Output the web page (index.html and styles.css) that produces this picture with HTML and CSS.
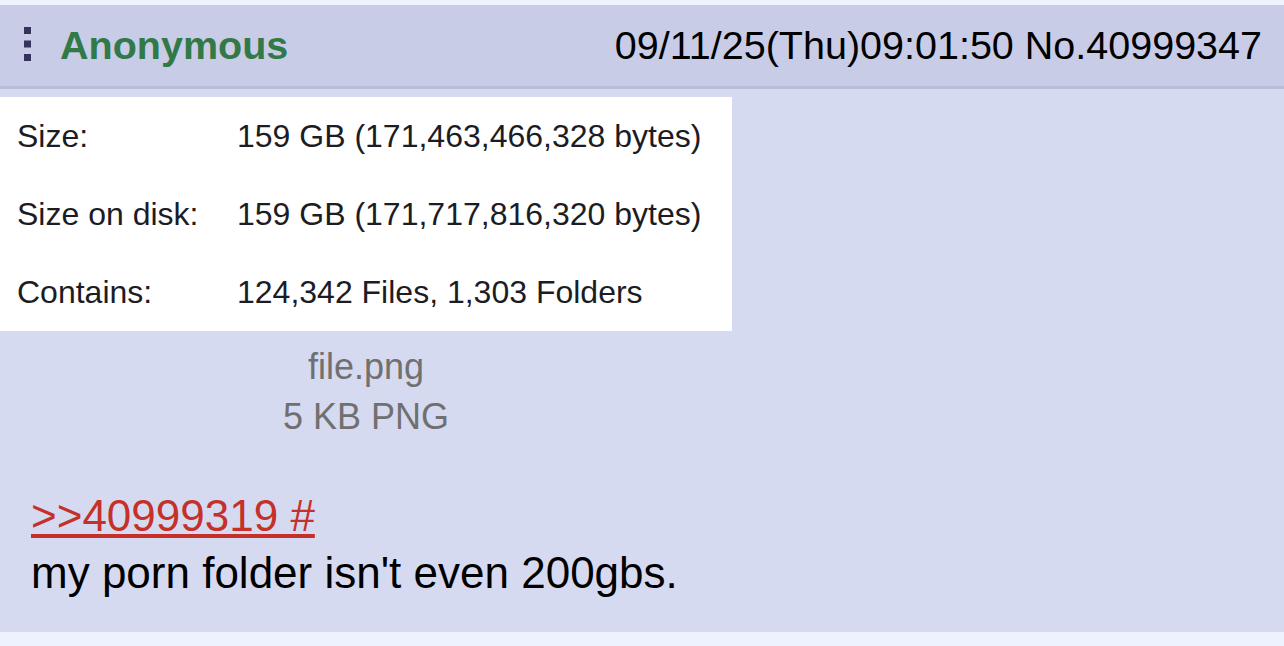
FILE: index.html
```html
<!DOCTYPE html>
<html>

<head>
    <meta charset="utf-8" />
    <title>No.40999347</title>
    <meta name="viewport" content="width=device-width, initial-scale=1">
    <link rel="stylesheet" href="styles.css">
</head>

<body>
    <div class="post">
        <div class="post-header">
            <svg class="menu-dots" width="7" height="34" viewBox="0 0 7 34">
                <rect x="0" y="0" width="7" height="7" />
                <rect x="0" y="13.5" width="7" height="7" />
                <rect x="0" y="27" width="7" height="7" />
            </svg>
            <span class="name">Anonymous</span>
            <span class="date-num">09/11/25(Thu)09:01:50 No.40999347</span>
        </div>
        <div class="post-body">
            <div class="file">
                <div class="thumb">
                    <span class="label">Size:</span>
                    <span class="value">159 GB (171,463,466,328 bytes)</span>
                    <span class="label">Size on disk:</span>
                    <span class="value">159 GB (171,717,816,320 bytes)</span>
                    <span class="label">Contains:</span>
                    <span class="value">124,342 Files, 1,303 Folders</span>
                </div>
                <div class="file-info">
                    file.png<br/>
                    5 KB PNG
                </div>
            </div>
            <div class="message">
                <a class="quotelink" href="#p40999319">&gt;&gt;40999319 #</a><br/>
                my porn folder isn't even 200gbs.
            </div>
        </div>
    </div>
</body>

</html>
```

FILE: styles.css
```css
body {
    margin: 0;
    padding-top: 5px;
    background-color: #eef2ff;
    font-family: 'Liberation Sans', Arial, sans-serif;
    color: #000;
}

.post-header {
    height: 81px;
    display: flex;
    align-items: center;
    padding: 0 22px 0 24px;
    background-color: #c9cce6;
    border-bottom: 3px solid #b9bdd8;
    font-size: 39.5px;
}

.menu-dots {
    fill: #33335c;
    margin-top: -3px;
}

.name {
    margin-left: 29px;
    font-weight: bold;
    color: #317a48;
}

.date-num {
    margin-left: auto;
}

.post-body {
    background-color: #d6daf0;
    padding: 8px 0 31px 0;
}

.file {
    width: 732px;
}

.thumb {
    display: grid;
    grid-template-columns: 220px auto;
    grid-auto-rows: 78px;
    align-items: center;
    padding-left: 17px;
    background-color: #fff;
    font-size: 32px;
    color: #1c1c24;
}

.file-info {
    margin-top: 11px;
    text-align: center;
    font-size: 36px;
    line-height: 50px;
    color: #707070;
}

.message {
    margin-top: 45px;
    padding-left: 31px;
    font-size: 44px;
    line-height: 57px;
}

.quotelink {
    color: #c5302a;
}
```
